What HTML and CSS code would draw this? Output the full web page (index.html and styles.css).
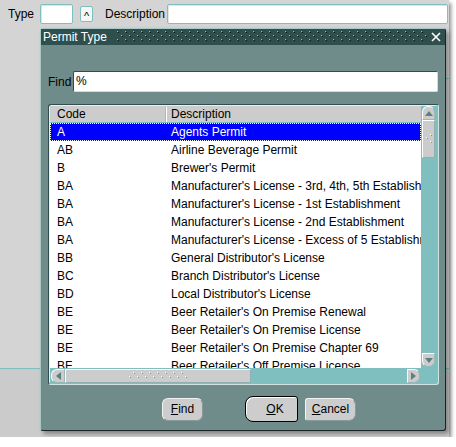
FILE: index.html
```html
<!DOCTYPE html>
<html>
<head>
<meta charset="utf-8">
<link rel="stylesheet" href="styles.css">
</head>
<body>
<div class="app">
  <div class="topbar">
    <span class="type-lbl">Type</span>
    <span class="field type-field"></span>
    <span class="lov">^</span>
    <span class="desc-lbl">Description</span>
    <span class="field desc-field"></span>
  </div>
  <div class="band-top"><div class="rule"></div></div>
  <div class="band-mid"></div>
  <div class="band-low"></div>

  <div class="dialog">
    <div class="titlebar">
      <span class="title">Permit Type</span>
      <svg class="tgrip" width="311" height="10" shape-rendering="crispEdges">
        <defs>
          <pattern id="tp" width="8" height="8" patternUnits="userSpaceOnUse">
            <rect x="0" y="0" width="1" height="1" fill="#8fc3c3"/>
            <rect x="1" y="1" width="1" height="1" fill="#0b1717"/>
            <rect x="4" y="4" width="1" height="1" fill="#8fc3c3"/>
            <rect x="5" y="5" width="1" height="1" fill="#0b1717"/>
          </pattern>
        </defs>
        <rect width="311" height="10" fill="url(#tp)"/>
      </svg>
      <svg class="close" width="10" height="10">
        <path d="M1 1 L9 9 M9 1 L1 9" stroke="#fff" stroke-width="1.6"/>
      </svg>
    </div>
    <div class="dlg-body">
      <div class="find-row">
        <span class="find-lbl">Find</span>
        <div class="find-input">%</div>
      </div>
      <div class="listbox">
        <div class="pane">
          <div class="hdr"><div class="c1">Code</div><div class="c2">Description</div></div>
          <div class="row sel"><div class="c1">A</div><div class="c2">Agents Permit</div></div>
          <div class="row"><div class="c1">AB</div><div class="c2">Airline Beverage Permit</div></div>
          <div class="row"><div class="c1">B</div><div class="c2">Brewer's Permit</div></div>
          <div class="row"><div class="c1">BA</div><div class="c2">Manufacturer's License - 3rd, 4th, 5th Establishment</div></div>
          <div class="row"><div class="c1">BA</div><div class="c2">Manufacturer's License - 1st Establishment</div></div>
          <div class="row"><div class="c1">BA</div><div class="c2">Manufacturer's License - 2nd Establishment</div></div>
          <div class="row"><div class="c1">BA</div><div class="c2">Manufacturer's License - Excess of 5 Establishments</div></div>
          <div class="row"><div class="c1">BB</div><div class="c2">General Distributor's License</div></div>
          <div class="row"><div class="c1">BC</div><div class="c2">Branch Distributor's License</div></div>
          <div class="row"><div class="c1">BD</div><div class="c2">Local Distributor's License</div></div>
          <div class="row"><div class="c1">BE</div><div class="c2">Beer Retailer's On Premise Renewal</div></div>
          <div class="row"><div class="c1">BE</div><div class="c2">Beer Retailer's On Premise License</div></div>
          <div class="row"><div class="c1">BE</div><div class="c2">Beer Retailer's On Premise Chapter 69</div></div>
          <div class="row"><div class="c1">BF</div><div class="c2">Beer Retailer's Off Premise License</div></div>
        </div>
        <div class="vscroll">
          <div class="sbtn up"><svg width="8" height="5"><path d="M0 5 L4 0 L8 5 Z" fill="#5d7f7f"/></svg></div>
          <div class="vthumb">
            <svg width="8" height="12" shape-rendering="crispEdges">
              <rect x="5" y="1" width="1" height="1" fill="#fff"/><rect x="6" y="2" width="1" height="1" fill="#6f9f9f"/>
              <rect x="1" y="4" width="1" height="1" fill="#fff"/><rect x="2" y="5" width="1" height="1" fill="#6f9f9f"/>
              <rect x="5" y="8" width="1" height="1" fill="#fff"/><rect x="6" y="9" width="1" height="1" fill="#6f9f9f"/>
            </svg>
          </div>
          <div class="vfill"></div>
          <div class="sbtn down"><svg width="8" height="5"><path d="M0 0 L8 0 L4 5 Z" fill="#5d7f7f"/></svg></div>
        </div>
        <div class="hscroll">
          <div class="sbtn left"><svg width="5" height="8"><path d="M5 0 L5 8 L0 4 Z" fill="#5d7f7f"/></svg></div>
          <div class="hthumb">
            <svg width="58" height="8" shape-rendering="crispEdges">
              <defs>
                <pattern id="hp" width="8" height="8" patternUnits="userSpaceOnUse">
                  <rect x="4" y="0" width="1" height="1" fill="#fff"/>
                  <rect x="5" y="1" width="1" height="1" fill="#6f9f9f"/>
                  <rect x="0" y="4" width="1" height="1" fill="#fff"/>
                  <rect x="1" y="5" width="1" height="1" fill="#6f9f9f"/>
                </pattern>
              </defs>
              <rect width="58" height="8" fill="url(#hp)"/>
            </svg>
          </div>
          <div class="hfill"></div>
          <div class="sbtn right"><svg width="5" height="8"><path d="M0 0 L5 4 L0 8 Z" fill="#5d7f7f"/></svg></div>
        </div>
        <div class="corner"></div>
      </div>
      <div class="btns">
        <div class="btn find"><u>F</u>ind</div>
        <div class="btn ok"><u>O</u>K</div>
        <div class="btn cancel"><u>C</u>ancel</div>
      </div>
    </div>
  </div>
</div>
</body>
</html>
```
FILE: styles.css
```css
* { box-sizing: border-box; }
body {
  margin: 0;
  background: #fff;
  font-family: "Liberation Sans", Arial, sans-serif;
  font-size: 12px;
  color: #000;
}
.app {
  position: relative;
  width: 449px;
  height: 437px;
  background: #d4d4d4;
  display: flex;
  flex-direction: column;
  box-shadow: 2px 3px 4px rgba(0, 0, 0, 0.45);
}
.topbar {
  display: flex;
  align-items: center;
  height: 20px;
  margin-top: 4px;
  padding-left: 8px;
}
.type-lbl { width: 32px; }
.field {
  height: 20px;
  background: #fff;
  border: 1px solid #7fbfbf;
  border-radius: 2px;
  box-shadow: inset 1px 1px 0 #e4e4e4;
}
.type-field { width: 33px; }
.lov {
  width: 13px;
  height: 16px;
  margin-left: 7px;
  border: 1px solid #7fbfbf;
  border-radius: 2px;
  background: #f6f6f6;
  display: flex;
  align-items: center;
  justify-content: center;
  font-size: 11px;
  padding-top: 3px;
}
.desc-lbl { margin-left: 12px; width: 62px; }
.desc-field { flex: 1; margin-right: 1px; }
.band-top {
  height: 55px;
  display: flex;
  justify-content: flex-end;
  align-items: flex-end;
}
.rule { width: 120px; height: 1px; background: #7fbfbf; }
.band-mid { height: 290px; border-bottom: 1px solid #7fbfbf; }
.band-low { flex: 1; background: #cbcbcb; }

.dialog {
  position: absolute;
  left: 40px;
  top: 28px;
  width: 406px;
  height: 403px;
  background: #708c8a;
  border: 1px solid;
  border-color: #a8c8c8 #1a2424 #1a2424 #a8c8c8;
  border-radius: 3px;
  box-shadow: 3px 3px 4px rgba(0, 0, 0, 0.35);
  display: flex;
  flex-direction: column;
}
.titlebar {
  height: 16px;
  background: #2f4f4f;
  display: flex;
  align-items: flex-start;
  padding-left: 2px;
  color: #fff;
}
.title { line-height: 16px; width: 74px; }
.tgrip { margin-top: 2px; display: block; }
.close { margin-top: 3px; margin-left: 3px; display: block; }

.dlg-body {
  padding: 26px 7px 0 7px;
  display: flex;
  flex-direction: column;
}
.find-row { display: flex; align-items: center; height: 21px; }
.find-lbl { width: 25px; }
.find-input {
  flex: 1;
  height: 21px;
  background: #fff;
  border: 1px solid;
  border-color: #2f4f4f #c8e0e0 #c8e0e0 #2f4f4f;
  border-radius: 2px;
  padding-left: 2px;
  line-height: 19px;
}

.listbox {
  margin-top: 12px;
  height: 281px;
  width: 391px;
  border: 1px solid;
  border-color: #2f4f4f #d0e4e4 #d0e4e4 #2f4f4f;
  border-radius: 3px;
  padding: 1px;
  background: #7fbfbf;
  box-shadow: inset 1px 1px 0 #e8f0f0;
  display: grid;
  grid-template-columns: 371px 16px;
  grid-template-rows: 262px 15px;
}
.pane {
  background: #fff;
  overflow: hidden;
}
.hdr {
  display: flex;
  height: 17px;
  background: #cccccc;
  border-bottom: 1px solid #7fbfbf;
  padding-top: 1px;
  line-height: 15px;
}
.hdr .c1 { border-right: 1px solid #8cc8c8; box-shadow: 1px 0 0 #fff; }
.c1 { width: 116px; padding-left: 7px; flex: none; white-space: nowrap; }
.c2 { padding-left: 5px; white-space: nowrap; }
.row {
  display: flex;
  height: 18px;
  padding-top: 1px;
  line-height: 17px;
}
.row.sel {
  background: #0000ff;
  color: #fff;
  border: 1px dotted #fff;
  padding-top: 0;
}
.row.sel .c1 { width: 115px; padding-left: 6px; }

.vscroll {
  display: flex;
  flex-direction: column;
  padding-left: 1px;
}
.sbtn {
  background: #cccccc;
  border: 1px solid;
  border-color: #fff #9ab8b8 #9ab8b8 #fff;
  display: flex;
  align-items: center;
  justify-content: center;
}
.sbtn svg { display: block; }
.up { width: 13px; height: 14px; border-radius: 6px 6px 0 0; }
.down { width: 13px; height: 14px; border-radius: 0 0 6px 6px; margin-bottom: 1px; }
.vthumb {
  width: 13px;
  height: 38px;
  background: #cccccc;
  border: 1px solid;
  border-color: #fff #8fb0b0 #8fb0b0 #fff;
  display: flex;
  align-items: center;
  justify-content: center;
}
.vfill { flex: 1; }

.hscroll {
  display: flex;
  align-items: flex-start;
  padding-top: 1px;
  padding-left: 1px;
}
.left { width: 14px; height: 14px; border-radius: 6px 0 0 6px; }
.right { width: 13px; height: 14px; border-radius: 0 6px 6px 0; margin-right: 1px; }
.hthumb {
  width: 186px;
  height: 14px;
  background: #cccccc;
  border: 1px solid;
  border-color: #fff #8fb0b0 #8fb0b0 #fff;
  display: flex;
  align-items: center;
  justify-content: center;
}
.hthumb svg { display: block; }
.hfill { flex: 1; }
.corner { background: #7fbfbf; }

.btns {
  display: flex;
  align-items: center;
  height: 26px;
  margin-top: 11px;
  padding-left: 114px;
}
.btn {
  height: 23px;
  background: #cdcdcd;
  border: 1px solid;
  border-color: #f2f2f2 #8a9a9a #8a9a9a #f2f2f2;
  border-radius: 6px;
  display: flex;
  align-items: center;
  justify-content: center;
}
.btn u { text-decoration: underline; }
.find { width: 41px; }
.ok {
  width: 53px;
  height: 26px;
  margin-left: 42px;
  border: 1px solid #000;
  border-radius: 8px 3px 3px 8px;
  box-shadow: inset 1px 1px 0 #fff;
  padding-left: 7px;
}
.cancel {
  width: 51px;
  margin-left: 7px;
  border-radius: 3px 7px 7px 3px;
}
```
